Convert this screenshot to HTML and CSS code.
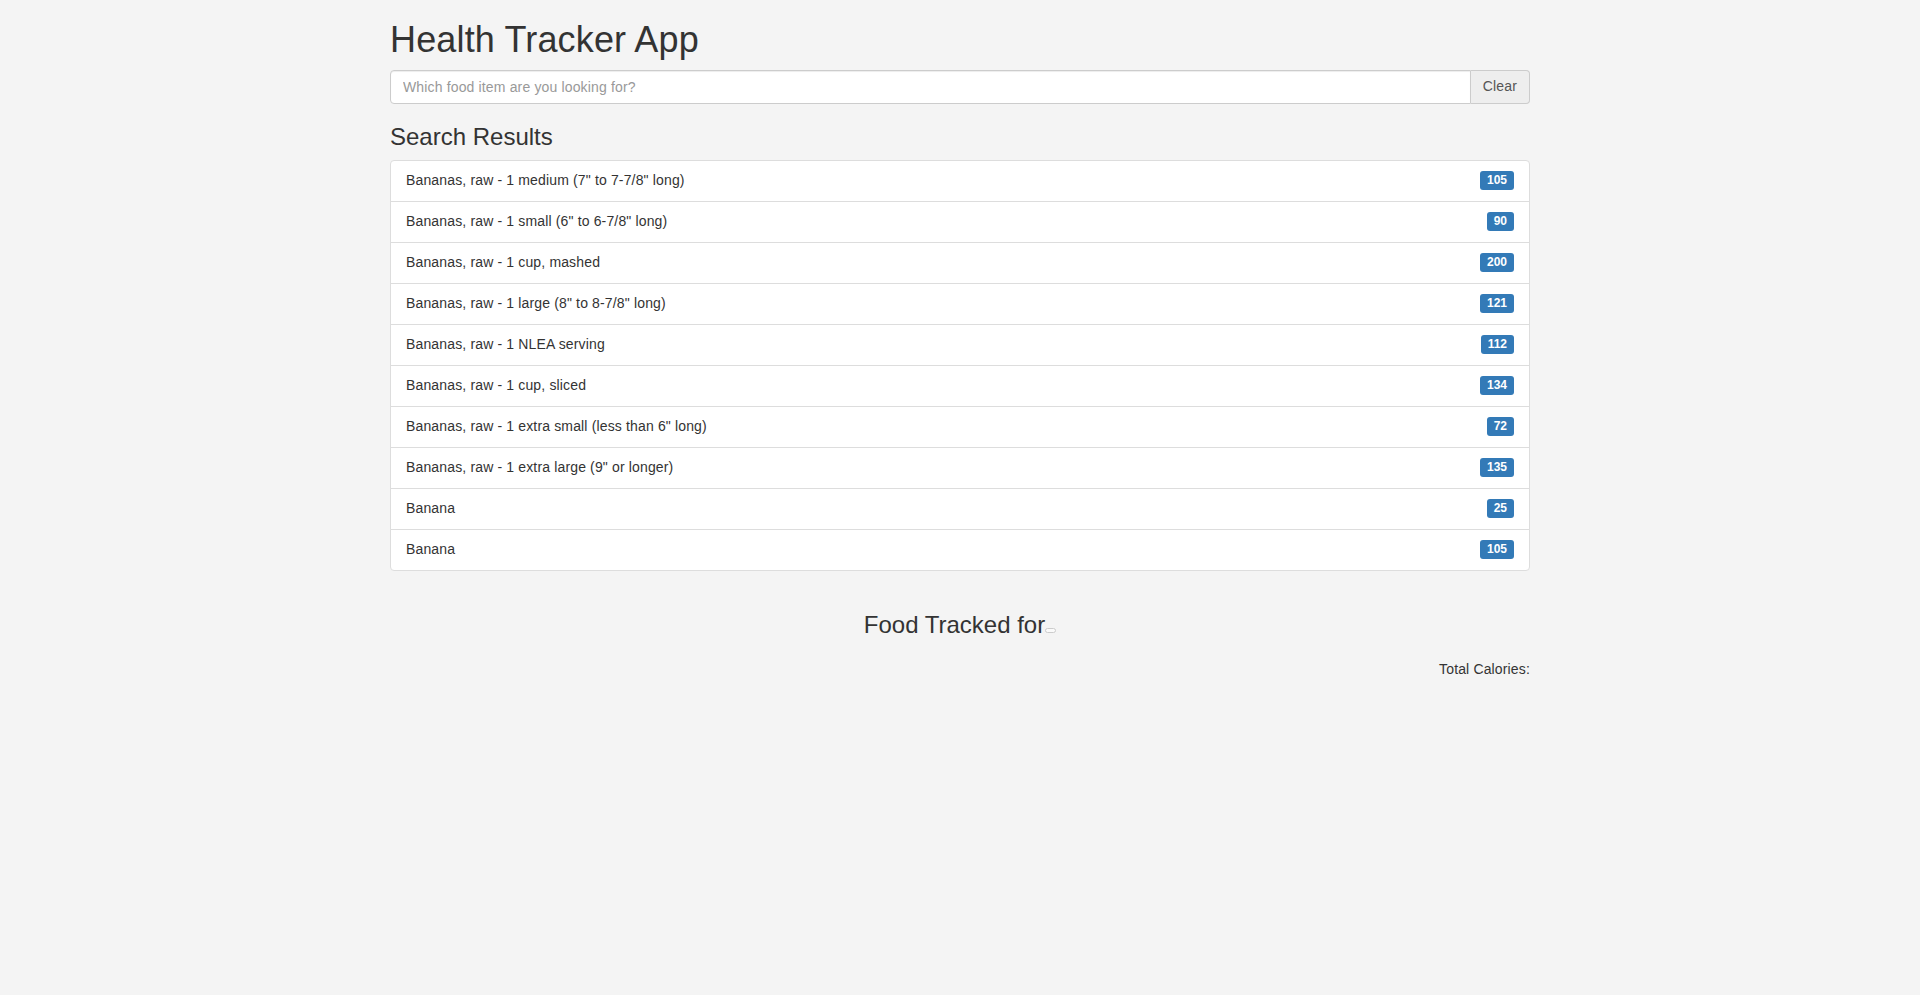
FILE: index.html
```html
<!DOCTYPE html>
<html lang="en">
<head>
<meta charset="utf-8">
<title>Health Tracker App</title>
<link rel="stylesheet" href="styles.css">
</head>
<body>
<div class="container">
  <h1 class="title">Health Tracker App</h1>
  <div class="input-group">
    <input class="search" type="text" placeholder="Which food item are you looking for?">
    <span class="addon">Clear</span>
  </div>
  <h3 class="heading">Search Results</h3>
  <ul class="list-group">
    <li class="item"><span>Bananas, raw - 1 medium (7" to 7-7/8" long)</span><span class="badge">105</span></li>
    <li class="item"><span>Bananas, raw - 1 small (6" to 6-7/8" long)</span><span class="badge">90</span></li>
    <li class="item"><span>Bananas, raw - 1 cup, mashed</span><span class="badge">200</span></li>
    <li class="item"><span>Bananas, raw - 1 large (8" to 8-7/8" long)</span><span class="badge">121</span></li>
    <li class="item"><span>Bananas, raw - 1 NLEA serving</span><span class="badge">112</span></li>
    <li class="item"><span>Bananas, raw - 1 cup, sliced</span><span class="badge">134</span></li>
    <li class="item"><span>Bananas, raw - 1 extra small (less than 6" long)</span><span class="badge">72</span></li>
    <li class="item"><span>Bananas, raw - 1 extra large (9" or longer)</span><span class="badge">135</span></li>
    <li class="item"><span>Banana</span><span class="badge">25</span></li>
    <li class="item"><span>Banana</span><span class="badge">105</span></li>
  </ul>
  <h3 class="heading tracked">Food Tracked for<span class="date-box"></span></h3>
  <ul class="tracked-list"></ul>
  <p class="total">Total Calories: </p>
</div>
</body>
</html>
```
FILE: styles.css
```css
* { box-sizing: border-box; }
html, body { margin: 0; padding: 0; }
body {
  background: #f4f4f4;
  color: #333;
  font-family: "Liberation Sans", Arial, Helvetica, sans-serif;
  font-size: 14px;
  line-height: 1.42857;
  letter-spacing: 0.15px;
}
.container {
  width: 1170px;
  margin: 0 auto;
  padding: 0 15px;
}
.title {
  font-size: 36px;
  font-weight: 500;
  line-height: 1.1;
  margin: 20px 0 10px;
  letter-spacing: 0.15px;
}
.input-group {
  display: flex;
  height: 34px;
}
.search {
  flex: 1;
  height: 34px;
  padding: 6px 12px;
  font-family: inherit;
  font-size: 14px;
  letter-spacing: 0.15px;
  color: #555;
  background: #fff;
  border: 1px solid #ccc;
  border-radius: 4px 0 0 4px;
  box-shadow: inset 0 1px 1px rgba(0,0,0,.075);
  outline: none;
}
.search::placeholder { color: #999; }
.addon {
  display: flex;
  align-items: center;
  padding: 6px 12px;
  color: #555;
  background: #eee;
  border: 1px solid #ccc;
  border-left: 0;
  border-radius: 0 4px 4px 0;
  font-size: 14px;
}
.heading {
  font-size: 24px;
  font-weight: 500;
  line-height: 1.1;
  margin: 20px 0 10px;
  letter-spacing: 0;
}
.list-group {
  list-style: none;
  margin: 0 0 20px;
  padding: 0;
}
.item {
  display: flex;
  justify-content: space-between;
  align-items: center;
  padding: 10px 15px;
  background: #fff;
  border: 1px solid #ddd;
  margin-bottom: -1px;
}
.item:first-child { border-radius: 4px 4px 0 0; }
.item:last-child { border-radius: 0 0 4px 4px; margin-bottom: 0; }
.badge {
  display: inline-block;
  background: #337ab7;
  color: #fff;
  font-size: 12px;
  font-weight: 700;
  line-height: 12px;
  letter-spacing: 0;
  padding: 3px 7px 4px;
  border-radius: 3px;
}
.tracked {
  text-align: center;
  margin-top: 41px;
}
.date-box {
  display: inline-block;
  width: 11px;
  height: 5px;
  border: 1px solid #ccc;
  border-radius: 3px;
  background: #fafafa;
  vertical-align: baseline;
}
.tracked-list {
  list-style: none;
  margin: 0;
  padding: 0;
  height: 12px;
}
.total {
  text-align: right;
  margin: 0 0 10px;
}
```
